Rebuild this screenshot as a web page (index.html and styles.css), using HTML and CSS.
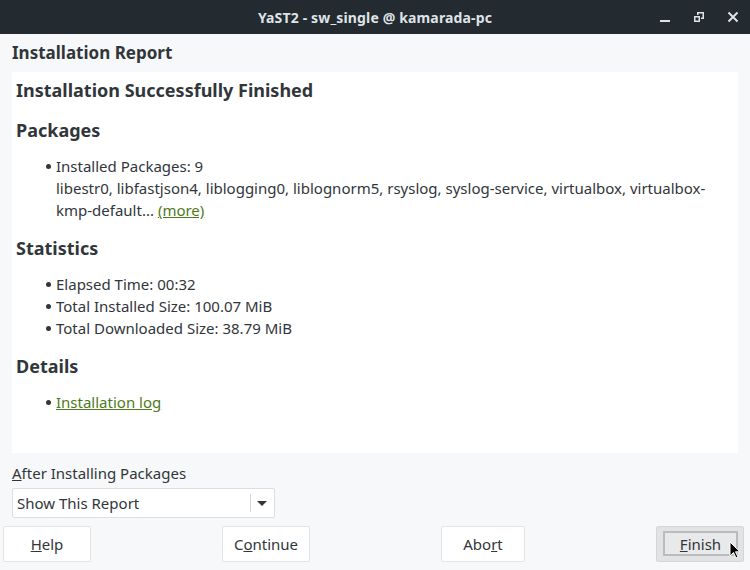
FILE: index.html
```html
<!DOCTYPE html>
<html>
<head>
<meta charset="utf-8">
<link rel="stylesheet" href="styles.css">
</head>
<body>
<div class="window">
  <header class="titlebar">
    <div class="title">YaST2 - sw_single @ kamarada-pc</div>
    <div class="wm-buttons">
      <span class="wm-btn">
        <svg width="12" height="12" viewBox="0 0 12 12"><rect x="1" y="9" width="10" height="2" fill="#dfe3e6"/></svg>
      </span>
      <span class="wm-btn">
        <svg width="12" height="12" viewBox="0 0 12 12"><path d="M4 1h7v7H8V4H4z M5.5 2.5v1.5H8v2.5h1.5v-4z" fill="#dfe3e6" fill-rule="evenodd"/><path d="M1 5h6v6H1z M2.5 6.5v3h3v-3z" fill="#dfe3e6" fill-rule="evenodd"/></svg>
      </span>
      <span class="wm-btn">
        <svg width="12" height="12" viewBox="0 0 12 12"><path d="M1.5 1.5L10.5 10.5M10.5 1.5L1.5 10.5" stroke="#dfe3e6" stroke-width="2"/></svg>
      </span>
    </div>
  </header>

  <main class="dialog">
    <h1 class="dialog-title">Installation Report</h1>

    <section class="report">
      <h2 class="report-h">Installation Successfully Finished</h2>

      <h2 class="report-h">Packages</h2>
      <ul class="report-list">
        <li><div>Installed Packages: 9<br>libestr0, libfastjson4, liblogging0, liblognorm5, rsyslog, syslog-service, virtualbox, virtualbox-kmp-default... <a class="link" href="#">(more)</a></div></li>
      </ul>

      <h2 class="report-h">Statistics</h2>
      <ul class="report-list">
        <li><div>Elapsed Time: 00:32</div></li>
        <li><div>Total Installed Size: 100.07 MiB</div></li>
        <li><div>Total Downloaded Size: 38.79 MiB</div></li>
      </ul>

      <h2 class="report-h">Details</h2>
      <ul class="report-list">
        <li><div><a class="link" href="#">Installation log</a></div></li>
      </ul>
    </section>

    <div class="after">
      <label class="after-label"><u>A</u>fter Installing Packages</label>
      <div class="combo">
        <span class="combo-text">Show This Report</span>
        <span class="combo-sep"></span>
        <span class="combo-arrow"></span>
      </div>
    </div>

    <div class="buttons">
      <button class="btn"><u>H</u>elp</button>
      <button class="btn">C<u>o</u>ntinue</button>
      <button class="btn btn-abort">Abo<u>r</u>t</button>
      <button class="btn btn-default"><span class="btn-inner"><u>F</u>inish</span>
        <svg class="cursor" width="12" height="18" viewBox="0 0 12 18"><path d="M1 1v14l3.5-3.5 2.5 5.5 2-1-2.5-5.2H11z" fill="#000" stroke="#fff" stroke-width="1"/></svg>
      </button>
    </div>
  </main>
</div>
</body>
</html>
```

FILE: styles.css
```css
* { box-sizing: border-box; }

html, body {
  margin: 0;
  padding: 0;
  width: 750px;
  height: 570px;
  overflow: hidden;
}

body {
  background: #f7f8f9;
  font-family: "Noto Sans", "DejaVu Sans", sans-serif;
  color: #31363b;
}

.window {
  display: flex;
  flex-direction: column;
  height: 570px;
}

.titlebar {
  position: relative;
  height: 34px;
  background: #232a30;
  display: flex;
  align-items: center;
  justify-content: center;
  flex: none;
}

.title {
  color: #dfe3e6;
  font-weight: bold;
  font-size: 14px;
  letter-spacing: 0.15px;
}

.wm-buttons {
  position: absolute;
  right: 11px;
  top: 0;
  height: 34px;
  display: flex;
  align-items: center;
  gap: 22px;
}

.wm-btn {
  width: 12px;
  height: 12px;
  display: flex;
}

.dialog {
  flex: 1;
  display: flex;
  flex-direction: column;
  padding: 0 12px;
}

.dialog-title {
  margin: 0;
  height: 38px;
  font-size: 17px;
  font-weight: bold;
  line-height: 38px;
  color: #31363b;
}

.report {
  background: #ffffff;
  height: 381px;
  padding: 6px 4px 0;
  flex: none;
}

.report-h {
  margin: 0 0 13px;
  font-size: 18px;
  line-height: 24px;
  font-weight: bold;
}

.report-h + .report-h { margin-top: 16px; }
.report-list + .report-h { margin-top: 15px; }

.report-list {
  list-style: none;
  margin: 0;
  padding: 0 20px 0 30px;
  font-size: 15px;
  line-height: 22px;
}

.report-list li {
  display: flex;
}

.report-list li::before {
  content: "";
  flex: none;
  width: 5px;
  height: 5px;
  border-radius: 50%;
  background: #31363b;
  margin: 9px 5px 0 0;
}

.link {
  color: #4e7a1c;
  text-decoration: underline;
}

.after {
  display: flex;
  flex-direction: column;
  margin-top: 9px;
}

.after-label {
  font-size: 15px;
  line-height: 22px;
  height: 22px;
}

.combo {
  margin-top: 4px;
  width: 263px;
  height: 30px;
  background: #fff;
  border: 1px solid #dcdee0;
  border-radius: 2px;
  display: flex;
  align-items: center;
  padding-left: 4px;
  font-size: 15px;
}

.combo-text { flex: 1; }

.combo-sep {
  width: 1px;
  height: 18px;
  background: #d4d6d8;
}

.combo-arrow {
  width: 0;
  height: 0;
  border-left: 5px solid transparent;
  border-right: 5px solid transparent;
  border-top: 5px solid #31363b;
  margin: 1px 7px 0 6px;
}

.buttons {
  margin: 8px -6px 0 -9px;
  display: flex;
  justify-content: space-between;
}

.btn {
  position: relative;
  height: 36px;
  width: 88px;
  background: #fff;
  border: 1px solid #e3e4e6;
  border-radius: 2px;
  font-family: "Noto Sans", "DejaVu Sans", sans-serif;
  font-size: 15px;
  color: #31363b;
  padding: 0;
  display: flex;
  align-items: center;
  justify-content: center;
}

.btn-abort { width: 84px; }

.btn-default {
  width: 88px;
  background: #e2e3e5;
  border-color: #d5d6d8;
  padding: 4px 5px 5px 6px;
}

.btn-inner {
  flex: 1;
  align-self: stretch;
  border: 2px solid #b9bbbd;
  display: flex;
  align-items: center;
  justify-content: center;
  background: #e8e9ea;
}

.cursor {
  position: absolute;
  left: 72px;
  top: 14px;
}
```
